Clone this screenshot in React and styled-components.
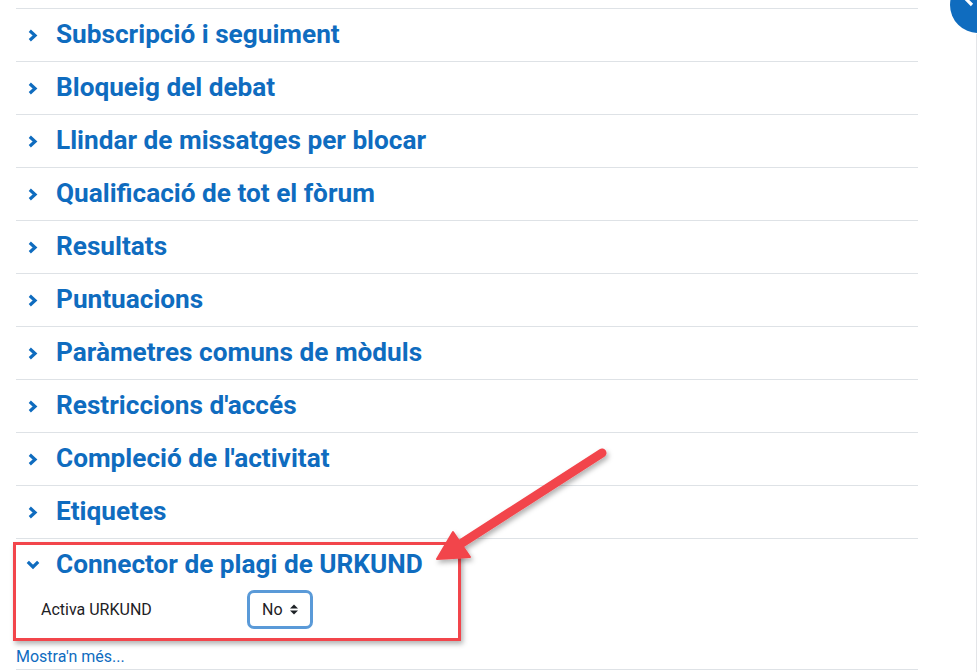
import React from 'react';
import styled, { createGlobalStyle } from 'styled-components';

const Global = createGlobalStyle`
   body {
      margin: 0;
      background: #fff;
      font-family: Roboto, "Liberation Sans", sans-serif;
      color: #1d2125;
   }
`;

const Page = styled.div`
   position: relative;
   width: 977px;
   height: 672px;
   overflow: hidden;
   padding: 8px 0 0 16px;
   box-sizing: border-box;
`;

const Form = styled.div`
   width: 902px;
`;

const Section = styled.div`
   border-top: 1px solid #dee2e6;
`;

const Header = styled.div`
   height: 52px;
   display: flex;
   align-items: center;
   color: #0f6cbf;
`;

const Toggle = styled.span`
   width: 40px;
   display: flex;
   align-items: center;
   padding-left: ${p => (p.open ? '10px' : '12px')};
   box-sizing: border-box;
`;

const Title = styled.h3`
   margin: 0;
   font-size: 26.2px;
   font-weight: 700;
   line-height: 1.2;
`;

const Body = styled.div`
   display: flex;
   align-items: center;
   height: 40px;
   margin-top: -2px;
   padding-left: 25px;
   font-size: 16px;
`;

const Label = styled.div`
   width: 206px;
`;

const Select = styled.div`
   width: 66px;
   height: 39px;
   box-sizing: border-box;
   border: 3px solid #5a9ad8;
   border-radius: 7px;
   display: flex;
   align-items: center;
   padding-left: 12px;
   gap: 7px;
   font-size: 16px;
   color: #1d2125;
`;

const More = styled.div`
   margin-top: 18px;
   padding-bottom: 3px;
   font-size: 16px;
   color: #0f6cbf;
   border-bottom: 1px solid #dee2e6;
`;

const Highlight = styled.div`
   position: absolute;
   left: 13px;
   top: 542px;
   width: 448px;
   height: 99px;
   box-sizing: border-box;
   border: 3px solid #f2454b;
   box-shadow: 2px 3px 5px rgba(0, 0, 0, 0.3);
`;

const Arrow = styled.svg`
   position: absolute;
   left: 0;
   top: 0;
   pointer-events: none;
`;

const DrawerToggle = styled.div`
   position: absolute;
   left: 950px;
   top: -23px;
   width: 56px;
   height: 56px;
   border-radius: 50%;
   background: #0f6cbf;
`;

const DrawerEdge = styled.div`
   position: absolute;
   left: 976px;
   top: 34px;
   width: 1px;
   height: 640px;
   background: #e3e5e8;
`;

const sections = [
   'Subscripció i seguiment',
   'Bloqueig del debat',
   'Llindar de missatges per blocar',
   'Qualificació de tot el fòrum',
   'Resultats',
   'Puntuacions',
   'Paràmetres comuns de mòduls',
   "Restriccions d'accés",
   "Compleció de l'activitat",
   'Etiquetes',
];

function ChevronRight() {
   return (
      <svg width="10" height="13" viewBox="0 0 10 13">
         <polyline points="1.8,1.8 7,6.5 1.8,11.2" fill="none" stroke="#0f6cbf" strokeWidth="3.2" />
      </svg>
   );
}

function ChevronDown() {
   return (
      <svg width="14" height="10" viewBox="0 0 14 10">
         <polyline points="1.8,1.8 7,7 12.2,1.8" fill="none" stroke="#0f6cbf" strokeWidth="3.2" />
      </svg>
   );
}

function SortIcon() {
   return (
      <svg width="8" height="11" viewBox="0 0 8 11">
         <polygon points="0,4.5 8,4.5 4,0.5" fill="#1d2125" />
         <polygon points="0,6.5 8,6.5 4,10.5" fill="#1d2125" />
      </svg>
   );
}

export default function App() {
   return (
      <Page>
         <Global />
         <Form>
            {sections.map(s => (
               <Section key={s}>
                  <Header>
                     <Toggle><ChevronRight /></Toggle>
                     <Title>{s}</Title>
                  </Header>
               </Section>
            ))}
            <Section>
               <Header>
                  <Toggle open><ChevronDown /></Toggle>
                  <Title>Connector de plagi de URKUND</Title>
               </Header>
               <Body>
                  <Label>Activa URKUND</Label>
                  <Select>No <SortIcon /></Select>
               </Body>
            </Section>
            <More>Mostra'n més...</More>
         </Form>
         <Highlight />
         <Arrow width="977" height="672">
            <defs>
               <filter id="sh" x="-20%" y="-20%" width="140%" height="140%">
                  <feDropShadow dx="2" dy="3" stdDeviation="2.5" floodColor="#000" floodOpacity="0.3" />
               </filter>
            </defs>
            <g filter="url(#sh)" fill="#f2454b" stroke="#f2454b">
               <line x1="602" y1="453" x2="462" y2="543" strokeWidth="9" strokeLinecap="round" />
               <polygon points="437,559 453,532 470,557" strokeWidth="2" strokeLinejoin="round" />
            </g>
         </Arrow>
         <DrawerToggle>
            <svg width="56" height="56" viewBox="0 0 56 56">
               <polyline points="22,26 17,31 22,36" transform="translate(0,-8)" fill="none" stroke="#fff" strokeWidth="3.2" />
            </svg>
         </DrawerToggle>
         <DrawerEdge />
      </Page>
   );
}
